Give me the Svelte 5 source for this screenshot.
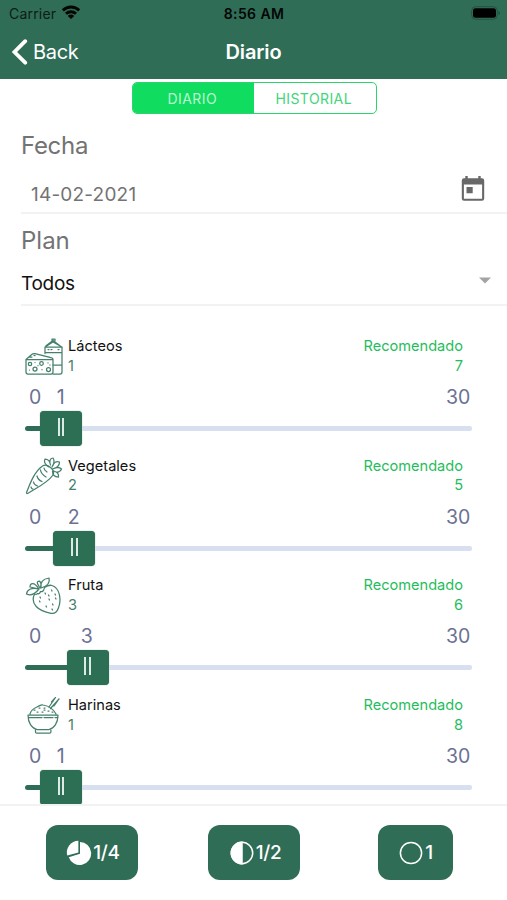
<script>
  const rows = [
    { name: 'Lácteos', value: 1, rec: 7, icon: 'dairy' },
    { name: 'Vegetales', value: 2, rec: 5, icon: 'carrot' },
    { name: 'Fruta', value: 3, rec: 6, icon: 'berry' },
    { name: 'Harinas', value: 1, rec: 8, icon: 'bowl' }
  ];
  const portions = [
    { label: '1/4', icon: 'quarter', cls: 'first' },
    { label: '1/2', icon: 'half', cls: 'second' },
    { label: '1', icon: 'whole', cls: 'third' }
  ];
</script>

<div class="screen">
  <header>
    <div class="status">
      <div class="carrier">
        <span>Carrier</span>
        <svg width="20" height="15" viewBox="0 0 20 15" fill="none" stroke="#030605" stroke-width="2.9">
          <path d="M1.8 5.4a11.6 11.6 0 0 1 16.4 0M5 8.800a7.100 7.100 0 0 1 10 0" />
          <path d="M10 14 6.800 10.900a4.500 4.500 0 0 1 6.400 0z" fill="#030605" stroke="none" />
        </svg>
      </div>
      <div class="clock">8:56 AM</div>
      <div class="battery">
        <svg width="30" height="14" viewBox="0 0 30 14">
          <rect x=".7" y=".7" width="25.6" height="12.6" rx="4" fill="none" stroke="#225442" />
          <rect x="2" y="2.2" width="23" height="9.6" rx="2.4" fill="#000" />
          <path d="M27.6 5v4.2c1.6-.7 1.6-3.5 0-4.2z" fill="#1c4a3a" />
        </svg>
      </div>
    </div>
    <nav>
      <div class="back">
        <svg width="16" height="26" viewBox="0 0 16 26" fill="none" stroke="#fff" stroke-width="3.8" stroke-linecap="round"><path d="M13.2 2.2 2.5 13l10.7 10.7" /></svg>
        <span>Back</span>
      </div>
      <h1>Diario</h1>
      <div class="side"></div>
    </nav>
  </header>

  <div class="segment">
    <div class="seg on">DIARIO</div>
    <div class="seg">HISTORIAL</div>
  </div>

  <section class="field date">
    <span class="label">Fecha</span>
    <div class="value">
      <span>14-02-2021</span>
      <svg width="24" height="26" viewBox="0 0 24 26">
        <path fill="#686868" fill-rule="evenodd" d="M4.300 0h2.400v2.300h10.600V0h2.400v2.300h1.300a2.200 2.200 0 0 1 2.200 2.200v18a2.200 2.200 0 0 1-2.200 2.200H3a2.200 2.200 0 0 1-2.200-2.200v-18A2.200 2.200 0 0 1 3 2.300h1.300zM2.900 8.500v14.200h18.200V8.500zM5.500 11h6.200v6.200H5.500z" />
      </svg>
    </div>
  </section>
  <section class="field plan">
    <span class="label">Plan</span>
    <div class="value">
      <span>Todos</span>
      <svg width="12" height="7" viewBox="0 0 12 7"><path d="M0 .5h12L6 6.500z" fill="#a3a3a3" /></svg>
    </div>
  </section>

  <main>
    {#each rows as row}
      <article>
        <div class="info">
          <svg class="food" viewBox="0 0 38 38" width="38" height="38" fill="none" stroke="#45806a" stroke-width="1.25" stroke-linecap="round" stroke-linejoin="round">
            {#if row.icon === 'dairy'}
              <path d="M20 15.500V9l8-5 9 5v25a2 2 0 0 1-2 2h-7M20 9h17M21 7.800l7-5.300 7 5.300M27 2.800V1h3v2M20 14.500h17M28 27h9M23 11.500h1m2 0h1m6 0h1" />
              <path d="M1 21.500h27V34a2 2 0 0 1-2 2H3a2 2 0 0 1-2-2zM1 21.500l6-5.300c1-.8 2-.8 3-.6l15 3.700q3 .5 3 2.200M4 19l3 .1m2-1.700 1 .3" />
              <circle cx="5" cy="26" r="1.700" /><circle cx="10" cy="31" r="2" /><circle cx="16.500" cy="25.500" r="1.800" /><circle cx="23.500" cy="31.500" r="2" /><path d="M10 24.500v.1m3 3v.1m4 4v.1m6-7v.1m2 2v.1M4.500 32v.1" />
            {:else if row.icon === 'carrot'}
              <path d="M1.500 35.500C5 27 9 15 17.500 9c3-2 5-1 7.500 1 3 2.500 5 5 3 8C22.500 26 11.500 31 3 36.300q-1.500.8-1.500-.8z" />
              <path d="M24 10c-5-3-5-6-4-8 3 0 5 2 5.500 6C24 4 25 1.500 28 1c2 3 1 6-1 9 2-5 4-6 7.500-5 0 4-3 6-7 7 4-2 7-2 9 0-1 3-4 4-8 2 4 1 5.500 3 5 6-4 0-6-2-6-6" />
              <path d="M15.500 13q.5 4 5.500 7M19 11q0 2 3 4M12 19q1 4 5 5.500M8.500 25q.5 3 4 4M6 30q.5 2 2 2" />
            {:else if row.icon === 'berry'}
              <path d="M9.500 17C5 27 13 34 26 36.300c4 .8 6-1 7.500-5.500C36.500 23 35 11 27 8.500q-3-1-7.500 2M9.500 17q2 1 3-.5 2 1 3-2 3 1 4-4" />
              <path d="M14 12C9 4 5 6 5 10q5 1 9 2zM14 12C6 10 2 13 1.500 17q6 3 12.500-5zM15 11C11 5 12 4 14.500 4q3 3 .5 7zM16 11C15 5 18 2 24 1q2 7-8 10z" />
              <path d="M20 16l.5 1m6-4 .5 1m-12 6 .5 1m8-3 .5 1m6-2 .5 1m-16 6 .5 1m9-3 .5 1m6-2 .5 1m-10 7 .5 1m6-3 .5 1m-1 4 .5 1" />
            {:else}
              <path d="M3 18h30c0 8-4 13.500-9 14.500H12C7 31.500 3 26 3 18zM5 17q1-4.500 7-7c3-1 4-3 6-2 6 1 11 5 13 9M10.500 33v2q0 1.200 1.200 1.200h13q1.200 0 1.200-1.200v-2M4 20.500h13m2 0h9m2 0h3" />
              <path d="m24 10 6.500-9.500M25.500 11.500 34 2M26.500 5 30 1M29 9l5-7M14 11h1m4 0h1m-8 4h1m4 0h1m5-1h1m-5-1h1m7 2h1m-19-2h1" />
            {/if}
          </svg>
          <div class="names"><span>{row.name}</span><span class="count">{row.value}</span></div>
          <div class="rec"><span>Recomendado</span><span>{row.rec}</span></div>
        </div>
        <div class="scale">
          <span class="min">0</span>
          <span class="cur" style="left: {22.4 + row.value * 13.1}px">{row.value}</span>
          <span>30</span>
        </div>
        <div class="slider">
          <div class="fill" style="width: {1.5 + row.value * 13.4}px"></div>
          <div class="thumb"><i></i><i></i></div>
          <div class="rest"></div>
        </div>
      </article>
    {/each}
  </main>

  <footer>
    {#each portions as p}
      <button class={p.cls}>
        <svg width="26" height="26" viewBox="0 0 26 26" fill="none" stroke="#fff" stroke-width="1.5">
          {#if p.icon === 'quarter'}
            <g fill="#fff" stroke="none"><path d="M14 13.700V2A11.500 11.500 0 1 1 2.800 17.200z" /><path d="M12.400 12.400V.7A11.700 11.700 0 0 0 1.300 15.600z" /></g>
          {:else if p.icon === 'half'}
            <circle cx="13" cy="13" r="10.700" /><path d="M13 2.300a10.700 10.700 0 0 0 0 21.400z" fill="#fff" />
          {:else}
            <circle cx="13" cy="13" r="10.600" />
          {/if}
        </svg>
        <span>{p.label}</span>
      </button>
    {/each}
  </footer>
</div>

<style>
  :global(body) { margin: 0; background: #fff; }
  * { box-sizing: border-box; }
  .screen { width: 507px; height: 900px; overflow: hidden; display: flex; flex-direction: column; background: #fff; font-family: Inter, Roboto, sans-serif; color: #111; }
  header { height: 79px; flex: none; background: #306d56; }
  .status { display: flex; height: 27px; align-items: center; padding: 0 7px 0 9px; color: #030605; font-size: 14px; }
  .carrier, .battery { flex: 1; display: flex; align-items: center; }
  .carrier { gap: 5px; color: #0c1c16; letter-spacing: .2px; }
  .carrier svg { margin-top: -2px; }
  .battery { justify-content: flex-end; }
  .battery svg { margin: -1px -1px 0 0; }
  .clock { font-weight: 600; letter-spacing: .4px; margin-right: 1px; }
  nav { display: flex; height: 50px; align-items: center; padding: 0 12px; color: #fff; }
  .back, .side { flex: 1; display: flex; align-items: center; }
  .back { gap: 5px; font-size: 20px; letter-spacing: -.3px; }
  h1 { margin: 0; font-size: 20px; font-weight: 600; letter-spacing: -.1px; }
  .segment { display: flex; flex: none; width: 245px; height: 32px; margin: 3px 0 0 131.5px; border: 1.5px solid #2cd46b; border-radius: 5px; overflow: hidden; }
  .seg { flex: 1; display: flex; align-items: center; justify-content: center; padding-right: 2px; color: #42d57a; font-size: 14px; letter-spacing: .42px; }
  .on { background: #10dc60; color: #b9f8d0; }
  .field { flex: none; margin-left: 21px; display: flex; flex-direction: column; border-bottom: 2px solid #f2f2f2; }
  .label { font-size: 24px; line-height: 30px; letter-spacing: -.3px; color: #737373; }
  .plan .label { letter-spacing: 0; }
  .value { display: flex; justify-content: space-between; align-items: center; font-size: 19px; }
  .date { height: 100px; padding-top: 17px; }
  .date .value { height: 36px; margin-top: 14px; padding: 2px 22px 0 10px; letter-spacing: .2px; color: #737373; }
  .date .value svg { margin-top: -11px; }
  .plan { height: 92px; padding-top: 12px; }
  .plan .value { height: 30px; margin-top: 12px; padding-right: 16px; letter-spacing: -.3px; }
  .plan .value svg { margin-top: -5px; }
  main { flex: 1; min-height: 0; overflow: hidden; padding: 30.5px 35px 0 25px; }
  article { height: 119.7px; display: flex; flex-direction: column; }
  .info { display: flex; height: 42px; }
  .food { flex: none; margin-top: 1px; }
  .names, .rec { display: flex; flex-direction: column; padding-top: .6px; font-size: 14.6px; line-height: 19.5px; }
  .names { margin-left: 5px; flex: 1; }
  .count { color: #45806a; }
  .rec { align-items: flex-end; color: #1fbd5c; margin-right: 9px; }
  .scale { position: relative; height: 36px; padding: 1px 2px 0 4px; display: flex; justify-content: space-between; align-items: center; font-size: 19.5px; letter-spacing: -.2px; color: #6b7193; }
  .cur { position: absolute; top: 6.5px; width: 0; display: flex; justify-content: center; line-height: 24px; }
  .slider { display: flex; align-items: center; height: 35px; margin-top: -3.5px; }
  .fill { height: 5px; border-radius: 3px 0 0 3px; background: #306d56; }
  .thumb { width: 42px; height: 35px; border-radius: 4px; background: #2d6f55; box-shadow: 0 0 1px #306d56; display: flex; justify-content: center; gap: 2.5px; padding-top: 7px; }
  .thumb i { width: 2px; height: 18px; background: #dcebe5; }
  .rest { flex: 1; height: 5px; background: #d8e0f0; border-radius: 0 2px 2px 0; }
  footer { flex: none; height: 96px; border-top: 2px solid #f2f2f2; display: flex; padding: 18.5px 54px 0 46px; background: #fff; }
  button { display: flex; align-items: center; justify-content: center; width: 92px; height: 55px; padding: 1px 0 0 2px; border: 0; border-radius: 12px; background: #306d56; color: #fff; font: 500 19px Inter, sans-serif; gap: 1px; letter-spacing: -.3px; }
  .second { margin-left: 70px; }
  .third { width: 75px; margin-left: auto; padding: 1px 0 0; }
</style>
